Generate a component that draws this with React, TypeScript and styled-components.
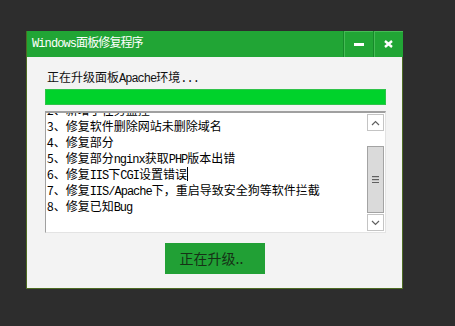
import React, { useEffect, useRef } from "react";
import styled, { createGlobalStyle } from "styled-components";

const Global = createGlobalStyle`
  html, body { margin: 0; padding: 0; background: #2d2d2d; }
  body { font-family: "Noto Sans CJK SC", "DejaVu Sans", sans-serif; }
`;

const Page = styled.div`
  width: 455px;
  height: 326px;
  padding: 31px 0 0 26px;
  box-sizing: border-box;
  background: #2d2d2d;
`;

const Window = styled.div`
  width: 377px;
  display: flex;
  flex-direction: column;
`;

const TitleBar = styled.div`
  height: 26px;
  background: #21a535;
  display: flex;
  align-items: stretch;
  box-shadow: inset 1px 0 0 #4d6b22;
`;

const Title = styled.div`
  flex: 1;
  color: #ffffff;
  font-family: "Liberation Mono", "Noto Sans CJK SC", monospace;
  font-size: 12px;
  letter-spacing: -0.9px;
  line-height: 26px;
  padding-left: 6px;
`;

const TitleButton = styled.div`
  width: 30px;
  display: flex;
  align-items: center;
  justify-content: center;
  border-left: 1px solid #178a2a;
  box-shadow: inset 1px 1px 0 #45bb55;
  box-sizing: border-box;
`;

const Body = styled.div`
  height: 232px;
  background: #f3f3f3;
  border: 1px solid #4d6b22;
  border-top: none;
  box-sizing: border-box;
  padding: 12px 16px 0 18px;
  display: flex;
  flex-direction: column;
`;

const Label = styled.div`
  font-size: 12px;
  line-height: 16px;
  height: 16px;
  color: #111;
  padding-left: 2px;
  font-family: "Noto Sans CJK SC", sans-serif;
  & span { font-family: "Liberation Mono", monospace; letter-spacing: -1px; }
`;

const Progress = styled.div`
  margin-top: 4px;
  height: 16px;
  width: 341px;
  background: #00d22b;
  box-sizing: border-box;
  border: 1px solid #2fc34a;
`;

const TextBox = styled.div`
  margin-top: 6px;
  width: 341px;
  height: 122px;
  box-sizing: border-box;
  border-top: 2px solid #a0a0a0;
  border-left: 1px solid #a0a0a0;
  border-right: 1px solid #e3e3e3;
  border-bottom: 1px solid #e3e3e3;
  background: #ffffff;
  display: flex;
`;

const Lines = styled.div`
  flex: 1;
  overflow: hidden;
  padding: 2px 0 0 1px;
  font-size: 12px;
  line-height: 16px;
  color: #000;
  & span.l { font-family: "Liberation Mono", monospace; letter-spacing: -1px; line-height: 16px; }
`;

const Line = styled.div`
  white-space: nowrap;
  height: 16px;
  line-height: 16px;
  overflow: visible;
`;

const Caret = styled.span`
  display: inline-block;
  width: 1px;
  height: 14px;
  background: #000;
  vertical-align: -2px;
`;

const ScrollBar = styled.div`
  width: 17px;
  margin: 1px 1px 1px 0;
  display: flex;
  flex-direction: column;
  background: #ffffff;
`;

const ArrowBtn = styled.div`
  height: 17px;
  flex: none;
  box-sizing: border-box;
  border: 1px solid #c4c4c4;
  background: #ffffff;
  display: flex;
  align-items: center;
  justify-content: center;
`;

const Track = styled.div<{ $h: number }>`
  height: ${(p) => p.$h}px;
  flex: none;
`;

const Thumb = styled.div`
  flex: 1;
  margin-bottom: 1px;
  box-sizing: border-box;
  border: 1px solid #a3a3a3;
  background: #dadada;
  display: flex;
  align-items: center;
  justify-content: center;
`;

const Footer = styled.div`
  display: flex;
  justify-content: center;
  padding-top: 10px;
  padding-right: 2px;
`;

const Button = styled.div`
  width: 100px;
  height: 31px;
  background: #21a035;
  color: #163116;
  font-size: 14px;
  line-height: 31px;
  text-align: center;
  font-family: "Noto Sans CJK SC", sans-serif;
  padding-right: 6px;
  box-sizing: border-box;
`;

const lines: React.ReactNode[] = [
  <>1、修复面板启动缓慢</>,
  <>2、新增了任务监控</>,
  <>3、修复软件删除网站未删除域名</>,
  <>4、修复部分</>,
  <>5、修复部分<span className="l">nginx</span>获取<span className="l">PHP</span>版本出错</>,
  <>6、修复<span className="l">IIS</span>下<span className="l">CGI</span>设置错误<Caret /></>,
  <>7、修复<span className="l">IIS/Apache</span>下，重启导致安全狗等软件拦截</>,
  <>8、修复已知<span className="l">Bug</span></>,
];

export default function App() {
  const ref = useRef<HTMLDivElement>(null);
  useEffect(() => {
    if (ref.current) ref.current.scrollTop = 29;
  }, []);
  return (
    <Page>
      <Global />
      <Window>
        <TitleBar>
          <Title>Windows面板修复程序</Title>
          <TitleButton>
            <svg width="10" height="3" viewBox="0 0 10 3">
              <rect x="0" y="0" width="10" height="3" fill="#fff" />
            </svg>
          </TitleButton>
          <TitleButton>
            <svg width="9" height="8" viewBox="0 0 9 8">
              <path d="M1 1 L8 7 M8 1 L1 7" stroke="#fff" strokeWidth="2.4" />
            </svg>
          </TitleButton>
        </TitleBar>
        <Body>
          <Label>
            正在升级面板<span>Apache</span>环境<span>...</span>
          </Label>
          <Progress />
          <TextBox>
            <Lines ref={ref}>
              {lines.map((l, i) => (
                <Line key={i}>{l}</Line>
              ))}
              <Line>&nbsp;</Line>
              <Line>&nbsp;</Line>
            </Lines>
            <ScrollBar>
              <ArrowBtn>
                <svg width="9" height="6" viewBox="0 0 9 6">
                  <path d="M1 5 L4.5 1.5 L8 5" stroke="#606060" strokeWidth="1.2" fill="none" />
                </svg>
              </ArrowBtn>
              <Track $h={15} />
              <Thumb>
                <svg width="7" height="7" viewBox="0 0 7 7">
                  <rect x="0" y="0" width="7" height="1.2" fill="#606060" />
                  <rect x="0" y="3" width="7" height="1.2" fill="#606060" />
                  <rect x="0" y="6" width="7" height="1" fill="#606060" />
                </svg>
              </Thumb>
              <ArrowBtn>
                <svg width="9" height="6" viewBox="0 0 9 6">
                  <path d="M1 1 L4.5 4.5 L8 1" stroke="#606060" strokeWidth="1.2" fill="none" />
                </svg>
              </ArrowBtn>
            </ScrollBar>
          </TextBox>
          <Footer>
            <Button>正在升级..</Button>
          </Footer>
        </Body>
      </Window>
    </Page>
  );
}
